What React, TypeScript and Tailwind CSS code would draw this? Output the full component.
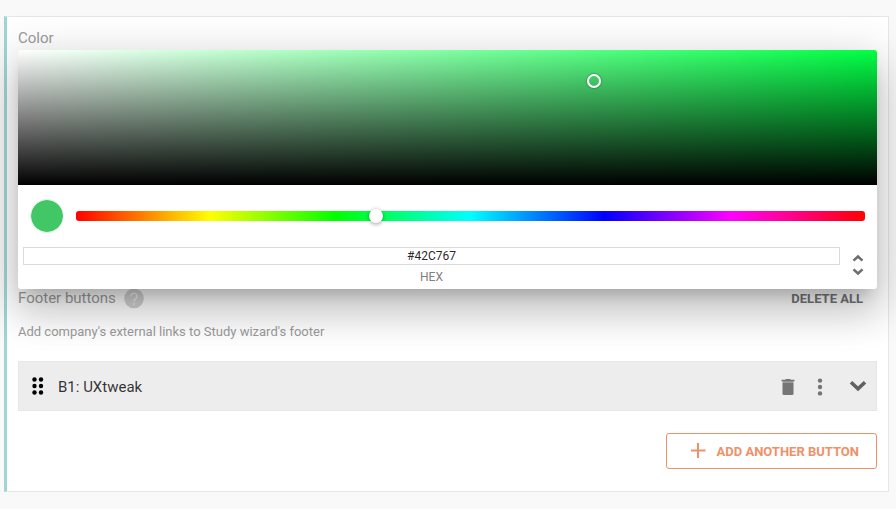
import React, { useState } from 'react';

const FooterHelp = () => (
  <button type="button" aria-label="Help" className="ml-2 h-5 w-5">
    <svg viewBox="0 0 20 20" className="h-5 w-5">
      <circle cx="10" cy="9.5" r="9.8" fill="#d3d3d3" />
      <path
        d="M7 7.200a3 3 0 1 1 5 2.200c-1.100 1-2 1.600-2 3"
        fill="none"
        stroke="#f4f4f4"
        strokeWidth="1.3"
      />
      <circle cx="10" cy="15" r="0.9" fill="#f4f4f4" />
    </svg>
  </button>
);

const DragHandle = () => (
  <svg viewBox="0 0 12 18" className="h-[18px] w-3" fill="#000">
    {[2.5, 9].map((x) =>
      [2.5, 9, 15.5].map((y) => <circle key={`${x}-${y}`} cx={x} cy={y} r="2.2" />)
    )}
  </svg>
);

const TrashIcon = () => (
  <svg viewBox="0 0 14 18" className="h-[18px] w-3.5">
    <path d="M1.500 5h11v10.700a1.300 1.300 0 0 1-1.300 1.300H2.800a1.300 1.300 0 0 1-1.300-1.300z" fill="#757575" />
    <path d="M1.500 3h11v2h-11z" fill="#9b9b9b" />
    <path d="M.5 1.800h3.500L5 1h4l1 .800h3.500v1.400H.5z" fill="#757575" />
  </svg>
);

const DotsIcon = () => (
  <svg viewBox="0 0 6 18" className="h-[18px] w-1.5" fill="#757575">
    <circle cx="3" cy="2.6" r="2.2" />
    <circle cx="3" cy="9" r="2.2" />
    <circle cx="3" cy="15.400" r="2.2" />
  </svg>
);

const ChevronIcon = () => (
  <svg viewBox="0 0 18 12" className="h-3 w-[18px]">
    <path d="M2 2.200l7 6.600 7-6.600" fill="none" stroke="#616161" strokeWidth="3.600" />
  </svg>
);

const ColorPicker = () => {
  const [hue, setHue] = useState(136);
  const [hex, setHex] = useState('#42C767');

  return (
    <div className="relative z-10 rounded-[3px] bg-white shadow-[0_11px_15px_-7px_rgba(0,0,0,0.2),0_24px_38px_3px_rgba(0,0,0,0.14),0_9px_46px_8px_rgba(0,0,0,0.12)]">
      <div
        className="relative h-[135px] rounded-t-[3px]"
        style={{
          background: `linear-gradient(to top, #000, transparent), linear-gradient(to right, #fff, transparent), hsl(${hue}, 100%, 50%)`,
        }}
      >
        <span className="absolute left-[67%] top-[23%] h-3.5 w-3.5 -translate-x-1/2 -translate-y-1/2 rounded-full shadow-[inset_0_0_0_2px_#fff,0_0_2px_rgba(0,0,0,0.6)]" />
      </div>

      <div className="flex h-12 items-center gap-3 px-3 pt-3.5">
        <span className="h-[34px] w-[34px] shrink-0 rounded-full border border-[#e3f1e7] bg-[#42c767] bg-clip-padding" />
        <input
          type="range"
          min={0}
          max={360}
          value={hue}
          onChange={(e) => setHue(Number(e.target.value))}
          aria-label="Hue"
          className="h-[10px] min-w-0 flex-1 appearance-none rounded-[3px] bg-[linear-gradient(to_right,#f00_0%,#ff0_17%,#0f0_33%,#0ff_50%,#00f_67%,#f0f_83%,#f00_100%)] [&::-webkit-slider-thumb]:h-3.5 [&::-webkit-slider-thumb]:w-3.5 [&::-webkit-slider-thumb]:appearance-none [&::-webkit-slider-thumb]:rounded-full [&::-webkit-slider-thumb]:bg-white [&::-webkit-slider-thumb]:shadow-[0_1px_4px_rgba(0,0,0,0.4)]"
        />
      </div>

      <div className="flex items-start pb-1 pl-[5px] pr-3 pt-3.5">
        <div className="flex min-w-0 flex-1 flex-col">
          <input
            id="hex"
            value={hex}
            onChange={(e) => setHex(e.target.value)}
            className="h-[18px] w-full border border-[#dadada] bg-white text-center text-[12px] text-black/87"
          />
          <label htmlFor="hex" className="pt-1 text-center text-[12px] leading-4 text-[#808080]">
            HEX
          </label>
        </div>
        <button type="button" aria-label="Change format" className="ml-[11px] mt-1.5 w-3.5">
          <svg viewBox="0 0 14 24" className="h-6 w-3.5" fill="none" stroke="#6e6e6e" strokeWidth="2.500">
            <path d="M2.500 7.700L7 3.500l4.500 4.200M2.500 16.300L7 20.500l4.500-4.200" />
          </svg>
        </button>
      </div>
    </div>
  );
};

const App = () => {
  return (
    <div className="min-h-screen bg-[#f9f9f9] pb-4 pl-1 pr-[7px] pt-4 font-[Roboto,sans-serif]">
      <main className="border border-l-[3px] border-[#e6e6e6] border-l-[#9fd5d5] bg-white pb-[22px] pl-[11px] pr-[11px] pt-[9px]">
        <h2 className="text-[15px] leading-6 text-[#9b9b9b]">Color</h2>
        <ColorPicker />

        <div className="flex items-start">
          <h2 className="text-[15px] leading-[18px] text-[#9b9b9b]">Footer buttons</h2>
          <FooterHelp />
          <button type="button" className="ml-auto mr-3.5 text-[13px] font-bold leading-5 text-[#757575]">
            DELETE ALL
          </button>
        </div>
        <p className="mt-3 text-[13px] leading-[22px] text-[#9b9b9b]">
          Add company's external links to Study wizard's footer
        </p>

        <div className="mt-[18px] flex h-[50px] items-center border border-[#e6e6e6] bg-[#ededed] pl-[13px] pr-[9px]">
          <DragHandle />
          <span className="ml-[14px] pt-0.5 text-[15px] leading-5 text-black/80">B1: UXtweak</span>
          <button type="button" aria-label="Delete" className="ml-auto pt-0.5">
            <TrashIcon />
          </button>
          <button type="button" aria-label="More" className="ml-[22px] pt-px">
            <DotsIcon />
          </button>
          <button type="button" aria-label="Expand" className="ml-[26px]">
            <ChevronIcon />
          </button>
        </div>

        <div className="mt-[22px] flex justify-end">
          <button
            type="button"
            className="flex h-9 items-center rounded-[3px] border border-[#ee9069] pl-6 pr-[17px] text-[13px] font-bold text-[#ee9069]"
          >
            <svg viewBox="0 0 16 16" className="mr-2.5 h-4 w-4" stroke="#ee9069" strokeWidth="2">
              <path d="M7 0v15M-.500 7.500h15" />
            </svg>
            <span className="pt-0.5">ADD ANOTHER BUTTON</span>
          </button>
        </div>
      </main>
    </div>
  );
};

export default App;
